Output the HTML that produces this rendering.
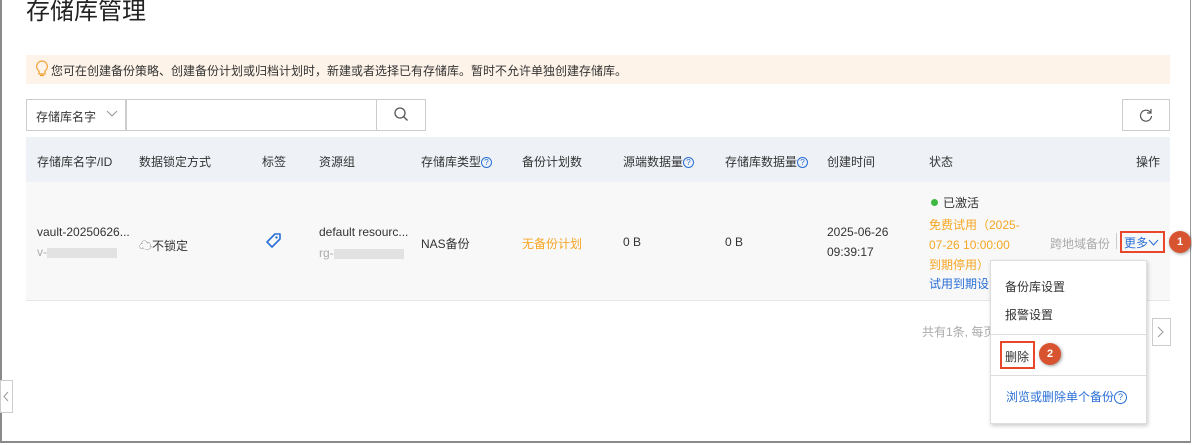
<!DOCTYPE html>
<html><head><meta charset="utf-8"><style>
*{box-sizing:border-box;margin:0;padding:0}
body{width:1192px;height:445px;overflow:hidden;background:#fff;font-family:"Liberation Sans","Noto Sans CJK SC",sans-serif;font-size:12px;color:#333;position:relative}
.frame{position:absolute;left:0;top:0;width:1191px;height:443px;border-left:2px solid #8a8a8a;border-right:1px solid #999;border-bottom:2px solid #8a8a8a}
.a{position:absolute;white-space:nowrap}
.title{left:26px;top:-9px;font-size:24px;color:#222}
.notice{left:26px;top:55px;width:1144px;height:29px;background:#fdf3e8}
.sel{left:26px;top:99px;width:100px;height:32px;border:1px solid #ccc;background:#fff;padding:8px 0 0 9px}
.inp{left:126px;top:99px;width:251px;height:32px;border:1px solid #ccc;background:#fff}
.btn{left:376px;top:99px;width:50px;height:32px;border:1px solid #ccc;background:#fff}
.ref{left:1122px;top:99px;width:48px;height:32px;border:1px solid #ccc;background:#fff}
.th{left:26px;top:137px;width:1144px;height:45px;background:#eef2f7}
.tr{left:26px;top:182px;width:1144px;height:119px;background:#f8f8f8;border-bottom:1px solid #e6e6e6}
.h{top:153px;color:#333}
.q{display:inline-block;width:11px;height:11px;border:1px solid #2a6fd6;border-radius:50%;color:#2a6fd6;font-size:8px;line-height:9px;text-align:center;vertical-align:1px}
.blur{display:inline-block;width:70px;height:10px;background:#e2e2e2;vertical-align:middle}
.menu{left:990px;top:260px;width:157px;height:164px;background:#fff;border:1px solid #ddd;box-shadow:1px 2px 4px rgba(0,0,0,.2)}
.badge{width:22px;height:22px;border-radius:50%;background:#d8532f;color:#fff;font-weight:bold;font-size:11px;text-align:center;line-height:22px;box-shadow:1px 1px 3px rgba(0,0,0,.4)}
.red{border:2px solid #e8472b}
</style></head><body>
<div class="frame"></div>
<div class="a title">存储库管理</div>
<div class="a notice"></div>
<svg class="a" style="left:35px;top:60px" width="14" height="18" viewBox="0 0 14 18"><path d="M7 1a5.5 5.5 0 0 0-3 10v3h6v-3A5.5 5.5 0 0 0 7 1zM5 15.5h4" fill="none" stroke="#f0a030" stroke-width="1.2"/></svg>
<div class="a" style="left:51px;top:62px">您可在创建备份策略、创建备份计划或归档计划时，新建或者选择已有存储库。暂时不允许单独创建存储库。</div>
<div class="a sel">存储库名字</div>
<svg class="a" style="left:106px;top:110px" width="12" height="8"><path d="M1 1l5 5 5-5" fill="none" stroke="#999"/></svg>
<div class="a inp"></div>
<div class="a btn"></div>
<svg class="a" style="left:393px;top:106px" width="16" height="16"><circle cx="7" cy="7" r="5" fill="none" stroke="#555" stroke-width="1.3"/><path d="M10.5 10.5l4 4" stroke="#555" stroke-width="1.3"/></svg>
<div class="a ref"></div>
<svg class="a" style="left:1139px;top:108px" width="14" height="14"><path d="M11.5 4.5A5.5 5.5 0 1 0 12.5 8" fill="none" stroke="#555" stroke-width="1.2"/><path d="M12 1v4H8" fill="none" stroke="#555" stroke-width="1.2"/></svg>
<div class="a th"></div>
<div class="a tr"></div>
<div class="a h" style="left:37px">存储库名字/ID</div>
<div class="a h" style="left:139px">数据锁定方式</div>
<div class="a h" style="left:262px">标签</div>
<div class="a h" style="left:319px">资源组</div>
<div class="a h" style="left:421px">存储库类型<span class="q">?</span></div>
<div class="a h" style="left:522px">备份计划数</div>
<div class="a h" style="left:623px">源端数据量<span class="q">?</span></div>
<div class="a h" style="left:725px">存储库数据量<span class="q">?</span></div>
<div class="a h" style="left:827px">创建时间</div>
<div class="a h" style="left:929px">状态</div>
<div class="a h" style="left:1136px">操作</div>
<div class="a" style="left:37px;top:225px">vault-20250626...</div>
<div class="a" style="left:37px;top:245px;color:#aaa">v-<span class="blur"></span></div>
<div class="a" style="left:139px;top:235px"><span style="color:#777;font-size:13px">☁</span>不锁定</div>
<svg class="a" style="left:265px;top:232px" width="18" height="18"><path d="M10 2h5v5l-8 8-5-5z" fill="none" stroke="#2a6fd6" stroke-width="1.6" stroke-linejoin="round"/><circle cx="11.5" cy="5.5" r="1.2" fill="#2a6fd6"/></svg>
<div class="a" style="left:319px;top:225px">default resourc...</div>
<div class="a" style="left:319px;top:246px;color:#aaa">rg-<span class="blur"></span></div>
<div class="a" style="left:421px;top:235px">NAS备份</div>
<div class="a" style="left:522px;top:235px;color:#f5a623">无备份计划</div>
<div class="a" style="left:623px;top:235px">0 B</div>
<div class="a" style="left:725px;top:235px">0 B</div>
<div class="a" style="left:827px;top:225px">2025-06-26</div>
<div class="a" style="left:827px;top:245px">09:39:17</div>
<div class="a" style="left:931px;top:194px"><span style="display:inline-block;width:7px;height:7px;border-radius:50%;background:#3db843;margin-right:5px;vertical-align:1px"></span>已激活</div>
<div class="a" style="left:929px;top:215px;color:#f5a623;line-height:20px">免费试用（2025-<br>07-26 10:00:00<br>到期停用）</div>
<div class="a" style="left:929px;top:275px;color:#2a6fd6">试用到期设</div>
<div class="a" style="left:1050px;top:235px;color:#aaa">跨地域备份</div>
<div class="a" style="left:1116px;top:233px;width:1px;height:16px;background:#ccc"></div>
<div class="a red" style="left:1120px;top:231px;width:45px;height:22px;color:#2a6fd6;padding:1px 0 0 2px">更多<svg width="11" height="8"><path d="M1 1l4.5 5 4.5-5" fill="none" stroke="#2a6fd6"/></svg></div>
<div class="a badge" style="left:1169px;top:231px">1</div>
<div class="a" style="left:922px;top:323px;color:#aaa">共有1条, 每页</div>
<div class="a" style="left:1152px;top:318px;width:19px;height:28px;border:1px solid #ccc;background:#fff"></div>
<svg class="a" style="left:1157px;top:326px" width="8" height="12"><path d="M1 1l5 5-5 5" fill="none" stroke="#999"/></svg>
<div class="a menu"></div>
<div class="a" style="left:1005px;top:278px">备份库设置</div>
<div class="a" style="left:1005px;top:306px">报警设置</div>
<div class="a" style="left:990px;top:334px;width:157px;height:1px;background:#ddd"></div>
<div class="a red" style="left:1000px;top:341px;width:35px;height:28px;padding:5px 0 0 3px">删除</div>
<div class="a badge" style="left:1039px;top:343px">2</div>
<div class="a" style="left:990px;top:375px;width:157px;height:1px;background:#ddd"></div>
<div class="a" style="left:1006px;top:388px;color:#2a6fd6">浏览或删除单个备份<span class="q" style="width:13px;height:13px;font-size:9px;line-height:11px">?</span></div>
<div class="a" style="left:0;top:380px;width:13px;height:33px;border:1px solid #ccc;background:#fff"></div>
<svg class="a" style="left:3px;top:391px" width="6" height="11"><path d="M5 1l-4 4.5 4 4.5" fill="none" stroke="#999"/></svg>
</body></html>
